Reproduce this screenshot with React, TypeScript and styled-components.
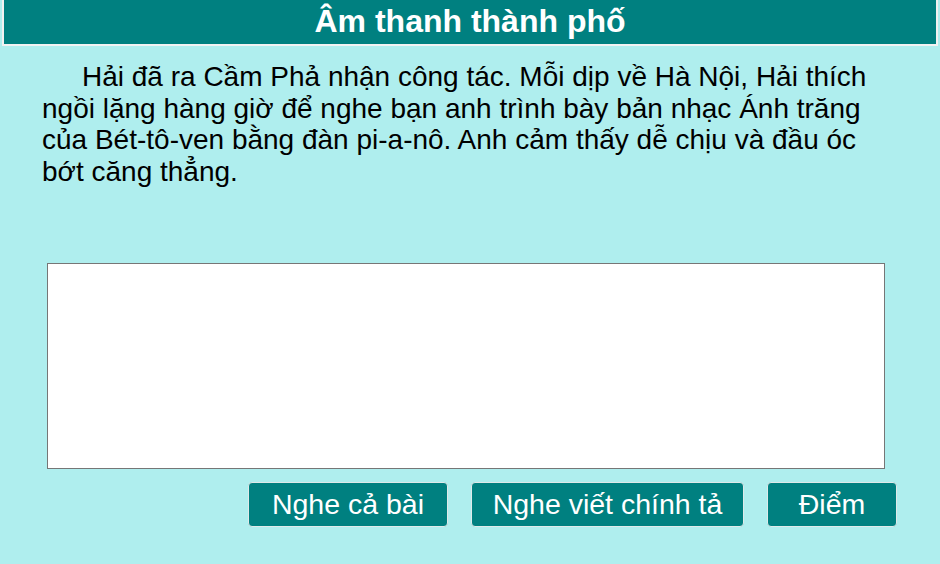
import styled, { createGlobalStyle } from "styled-components";

const GlobalStyle = createGlobalStyle`
  html, body {
    margin: 0;
    padding: 0;
    background: #afeeee;
    font-family: "Liberation Sans", Arial, sans-serif;
  }
`;

const Page = styled.div`
  width: 940px;
  height: 564px;
  background: #afeeee;
  display: flex;
  flex-direction: column;
  box-sizing: border-box;
`;

const Title = styled.h1`
  margin: 0 2px;
  height: 44px;
  background: #008080;
  border: 2px solid #f2f2f2;
  border-top: none;
  color: #fff;
  font-size: 32px;
  font-weight: bold;
  line-height: 42px;
  text-align: center;
`;

const Passage = styled.p`
  margin: 15px 58px 0 42px;
  font-size: 28px;
  line-height: 31.7px;
  text-indent: 40px;
  color: #000;
`;

const Answer = styled.textarea`
  margin: 75px 0 0 47px;
  width: 838px;
  height: 206px;
  box-sizing: border-box;
  border: 1px solid #767676;
  background: #fff;
  resize: none;
  font-family: inherit;
  font-size: 20px;
`;

const Actions = styled.div`
  display: flex;
  justify-content: flex-end;
  gap: 23px;
  margin: 13px 43px 0 0;
`;

const Button = styled.button<{ $w: number }>`
  width: ${(p) => p.$w}px;
  height: 45px;
  background: #008080;
  color: #fff;
  border: 1px solid #dfe9e9;
  border-radius: 4px;
  font-family: "Liberation Sans", Arial, sans-serif;
  font-size: 28.5px;
  padding: 0;
  cursor: pointer;
`;

export default function App() {
  return (
    <>
      <GlobalStyle />
      <Page>
        <Title>Âm thanh thành phố</Title>
        <Passage>
          Hải đã ra Cầm Phả nhận công tác. Mỗi dịp về Hà Nội, Hải thích ngồi
          lặng hàng giờ để nghe bạn anh trình bày bản nhạc Ánh trăng của
          Bét-tô-ven bằng đàn pi-a-nô. Anh cảm thấy dễ chịu và đầu óc bớt căng
          thẳng.
        </Passage>
        <Answer />
        <Actions>
          <Button $w={200}>Nghe cả bài</Button>
          <Button $w={273}>Nghe viết chính tả</Button>
          <Button $w={130}>Điểm</Button>
        </Actions>
      </Page>
    </>
  );
}
